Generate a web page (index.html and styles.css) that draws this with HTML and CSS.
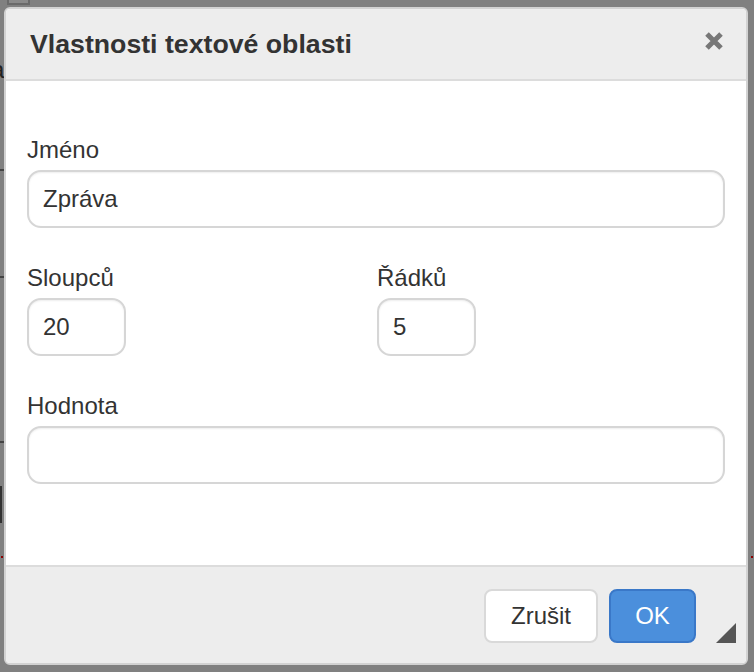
FILE: index.html
```html
<!DOCTYPE html>
<html lang="cs">
<head>
<meta charset="utf-8">
<title>Vlastnosti textové oblasti</title>
<link rel="stylesheet" href="styles.css">
</head>
<body>
<div class="backdrop">
  <div class="bg-box"></div>
  <div class="bg-letter">a</div>
  <div class="bg-line l1"></div>
  <div class="bg-line l2"></div>
  <div class="bg-line l3"></div>
  <div class="bg-bar"></div>
  <div class="bg-dot d1"></div>
  <div class="bg-dot d2"></div>
</div>
<div class="dialog">
  <div class="dialog-title">
    <span class="title-text">Vlastnosti textové oblasti</span>
    <svg class="close" width="20" height="20" viewBox="0 0 20 20" aria-label="Zavřít">
      <path d="M3 3 L17 17 M17 3 L3 17" stroke="#777" stroke-width="5" stroke-linecap="butt" fill="none"/>
    </svg>
  </div>
  <div class="dialog-body">
    <div class="field">
      <label class="label">Jméno</label>
      <div class="input wide">Zpráva</div>
    </div>
    <div class="row">
      <div class="field">
        <label class="label">Sloupců</label>
        <div class="input small">20</div>
      </div>
      <div class="field">
        <label class="label">Řádků</label>
        <div class="input small">5</div>
      </div>
    </div>
    <div class="field">
      <label class="label">Hodnota</label>
      <div class="input wide"></div>
    </div>
  </div>
  <div class="dialog-footer">
    <button class="btn btn-cancel">Zrušit</button>
    <button class="btn btn-ok">OK</button>
    <div class="resize"></div>
  </div>
</div>
</body>
</html>
```
FILE: styles.css
```css
* { box-sizing: border-box; }
html, body { margin: 0; height: 100%; }
body {
  background: #808080;
  font-family: "Liberation Sans", Arial, Helvetica, sans-serif;
  color: #333;
  padding: 7px 0 0 4px;
  position: relative;
  overflow: hidden;
}
.backdrop .bg-box {
  position: absolute; left: 7px; top: -4px; width: 23px; height: 9px;
  border: 2px solid #6a6a6a; background: #8a8a8a;
}
.backdrop .bg-letter {
  position: absolute; left: -9px; top: 56px; font-size: 24px; color: #222;
}
.backdrop .bg-line { position: absolute; left: 0; width: 4px; height: 2px; background: #444; }
.backdrop .l1 { top: 169px; }
.backdrop .l2 { top: 276px; }
.backdrop .l3 { top: 441px; }
.backdrop .bg-bar { position: absolute; left: 0; top: 486px; width: 2px; height: 37px; background: #333; }
.backdrop .bg-dot { position: absolute; top: 556px; width: 2px; height: 2px; background: #8b0000; }
.backdrop .d1 { left: 1px; }
.backdrop .d2 { left: 751px; }

.dialog {
  position: relative;
  width: 744px;
  height: 658px;
  border: 2px solid #d2d2d2;
  border-radius: 6px;
  background: #fff;
  overflow: hidden;
  display: flex;
  flex-direction: column;
}
.dialog-title {
  height: 72px;
  background: #ededed;
  border-bottom: 2px solid #dcdcdc;
  display: flex;
  justify-content: space-between;
  align-items: flex-start;
  padding: 20px 22px 0 24px;
}
.title-text {
  font-size: 26.7px;
  font-weight: bold;
  line-height: 30px;
  color: #333;
}
.close { margin-top: 2px; display: block; }

.dialog-body {
  height: 484px;
  padding: 55px 21px 0 21px;
  background: #fff;
}
.field { display: flex; flex-direction: column; align-items: flex-start; }
.field + .field, .field + .row, .row + .field { margin-top: 36px; }
.row { display: grid; grid-template-columns: 1fr 1fr; column-gap: 2px; }
.row .field + .field { margin-top: 0; }
.label {
  font-size: 24px;
  line-height: 28px;
  margin-bottom: 6px;
  color: #333;
}
.input {
  height: 58px;
  border: 2px solid #d6d6d6;
  border-radius: 14px;
  box-shadow: inset 0 1px 2px rgba(0,0,0,0.07);
  background: #fff;
  font-size: 24px;
  line-height: 54px;
  padding: 0 14px;
  color: #333;
}
.input.wide { width: 100%; }
.input.small { width: 99px; }

.dialog-footer {
  flex: 1;
  position: relative;
  background: #ededed;
  border-top: 2px solid #dcdcdc;
  display: flex;
  justify-content: flex-end;
  align-items: flex-start;
  padding: 22px 50px 0 0;
  gap: 11px;
}
.btn {
  height: 54px;
  border-radius: 8px;
  font-family: "Liberation Sans", Arial, Helvetica, sans-serif;
  font-size: 24px;
  padding: 0;
  text-align: center;
  cursor: pointer;
}
.btn-cancel {
  width: 114px;
  background: #fff;
  border: 2px solid #d9d9d9;
  color: #333;
}
.btn-ok {
  width: 87px;
  background: #4b8fdc;
  border: 2px solid #3a78c8;
  color: #fff;
}
.resize {
  position: absolute;
  right: 10px;
  bottom: 20px;
  width: 0;
  height: 0;
  border-style: solid;
  border-width: 0 0 20px 20px;
  border-color: transparent transparent #555 transparent;
}
```
